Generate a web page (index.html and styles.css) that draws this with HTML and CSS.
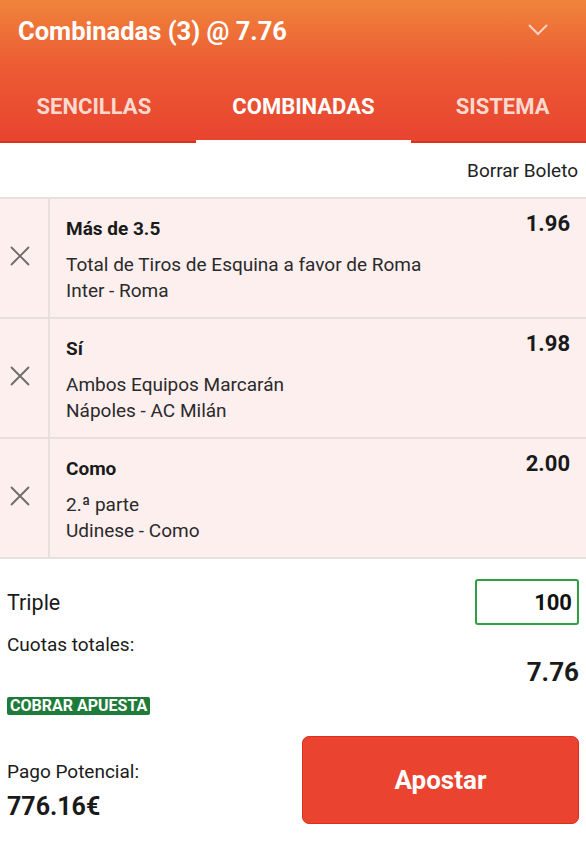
FILE: index.html
```html
<!DOCTYPE html>
<html lang="es">
<head>
    <meta charset="UTF-8">
    <title>Boleto - Combinadas</title>
    <meta name="viewport" content="width=device-width, initial-scale=1.0">
    <link rel="stylesheet" href="styles.css">
</head>
<body>

<header class="slip-header">
    <div class="slip-title">
        <span>Combinadas (3) @ 7.76</span>
        <svg class="chevron" width="22" height="14" viewBox="0 0 22 14">
            <polyline points="2,2 11,11 20,2" fill="none" stroke="#fbd3c2" stroke-width="2"/>
        </svg>
    </div>
    <nav class="tabs">
        <a href="#" class="tab">SENCILLAS</a>
        <a href="#" class="tab active">COMBINADAS</a>
        <a href="#" class="tab">SISTEMA</a>
    </nav>
</header>

<div class="clear-row">
    <a href="#" class="clear-link">Borrar Boleto</a>
</div>

<div class="bets">
    <div class="bet">
        <button class="remove">
            <svg width="22" height="22" viewBox="0 0 22 22"><path d="M2 2L20 20M20 2L2 20" stroke="#6b6b6b" stroke-width="1.8"/></svg>
        </button>
        <div class="bet-info">
            <div class="bet-top">
                <strong>Más de 3.5</strong>
                <span class="odds">1.96</span>
            </div>
            <p>Total de Tiros de Esquina a favor de Roma<br>Inter - Roma</p>
        </div>
    </div>
    <div class="bet">
        <button class="remove">
            <svg width="22" height="22" viewBox="0 0 22 22"><path d="M2 2L20 20M20 2L2 20" stroke="#6b6b6b" stroke-width="1.8"/></svg>
        </button>
        <div class="bet-info">
            <div class="bet-top">
                <strong>Sí</strong>
                <span class="odds">1.98</span>
            </div>
            <p>Ambos Equipos Marcarán<br>Nápoles - AC Milán</p>
        </div>
    </div>
    <div class="bet">
        <button class="remove">
            <svg width="22" height="22" viewBox="0 0 22 22"><path d="M2 2L20 20M20 2L2 20" stroke="#6b6b6b" stroke-width="1.8"/></svg>
        </button>
        <div class="bet-info">
            <div class="bet-top">
                <strong>Como</strong>
                <span class="odds">2.00</span>
            </div>
            <p>2.ª parte<br>Udinese - Como</p>
        </div>
    </div>
</div>

<div class="summary">
    <div class="stake-row">
        <span class="stake-label">Triple</span>
        <input class="stake-input" type="text" value="100">
    </div>
    <div class="odds-row">
        <div class="odds-left">
            <span>Cuotas totales:</span>
            <span class="cashout">COBRAR APUESTA</span>
        </div>
        <strong class="total-odds">7.76</strong>
    </div>
    <div class="payout-row">
        <div class="payout">
            <span>Pago Potencial:</span>
            <strong>776.16€</strong>
        </div>
        <button class="bet-btn">Apostar</button>
    </div>
</div>

</body>
</html>
```

FILE: styles.css
```css
body {
    margin: 0;
    padding: 0;
    font-family: Roboto, 'Noto Sans', sans-serif;
    background: #fff;
    color: #1a1a1a;
    width: 586px;
}
.slip-header {
    background: linear-gradient(to bottom, #ef843b 0%, #ec5c34 45%, #e8432f 100%);
    color: #fff;
}
.slip-title {
    height: 62px;
    display: flex;
    align-items: center;
    justify-content: space-between;
    padding: 0 37px 0 18px;
    font-size: 25.5px;
    font-weight: bold;
}
.chevron {
    margin-top: -2px;
}
.tabs {
    display: flex;
    height: 81px;
}
.tab {
    flex: 1 1 auto;
    display: flex;
    align-items: center;
    justify-content: center;
    padding-top: 10px;
    box-sizing: border-box;
    color: #fcd9cf;
    text-decoration: none;
    font-size: 22px;
    font-weight: bold;
    border-bottom: 2px solid #d8321f;
}
.tab:first-child {
    padding-right: 8px;
}
.tab:last-child {
    padding-left: 8px;
}
.tab.active {
    color: #fff;
    border-bottom: 3px solid #fff;
}
.clear-row {
    display: flex;
    justify-content: flex-end;
    align-items: center;
    height: 54px;
    padding-right: 8px;
}
.clear-link {
    color: #222;
    text-decoration: none;
    font-size: 19px;
}
.bets {
    border-top: 2px solid #e6e0df;
}
.bet {
    display: flex;
    height: 118px;
    background: #fcefee;
    border-bottom: 2px solid #e6e0df;
}
.remove {
    width: 50px;
    flex: none;
    border: none;
    border-right: 2px solid #e6e0df;
    background: transparent;
    display: flex;
    align-items: center;
    justify-content: flex-start;
    padding: 0 0 4px 9px;
}
.bet-info {
    flex: 1;
    padding: 13px 16px 0 16px;
}
.bet-top {
    display: flex;
    justify-content: space-between;
    align-items: flex-start;
}
.bet-top strong {
    font-size: 19px;
    line-height: 24px;
    margin-top: 5px;
}
.odds {
    font-size: 22px;
    line-height: 26px;
    font-weight: bold;
    margin-top: -1px;
}
.bet-info p {
    margin: 11px 0 0;
    font-size: 19px;
    line-height: 26px;
    color: #2a2a2a;
}
.summary {
    padding: 20px 7px 0 7px;
}
.stake-row {
    display: flex;
    justify-content: space-between;
    align-items: center;
}
.stake-label {
    font-size: 21.5px;
}
.stake-input {
    width: 104px;
    height: 46px;
    box-sizing: border-box;
    border: 2px solid #2ea043;
    border-radius: 3px;
    text-align: right;
    font-family: inherit;
    font-size: 22px;
    font-weight: bold;
    padding: 0 5px;
    color: #111;
    outline: none;
}
.odds-row {
    display: flex;
    justify-content: space-between;
    align-items: center;
    margin-top: 9px;
}
.odds-left {
    display: flex;
    flex-direction: column;
    align-items: flex-start;
    gap: 41px;
    font-size: 19px;
    line-height: 22px;
}
.total-odds {
    font-size: 26px;
    margin-bottom: 6px;
}
.cashout {
    background: #1f7b3a;
    color: #fff;
    font-size: 16px;
    font-weight: bold;
    padding: 0 3px;
    border-radius: 2px;
    line-height: 18px;
}
.payout-row {
    display: flex;
    justify-content: space-between;
    align-items: flex-start;
    margin-top: 21px;
}
.payout {
    display: flex;
    flex-direction: column;
    gap: 9px;
    padding-top: 25px;
}
.payout span {
    font-size: 19px;
    line-height: 22px;
}
.payout strong {
    font-size: 25px;
    line-height: 30px;
}
.bet-btn {
    width: 277px;
    height: 88px;
    background: #ea4330;
    border: 1px solid #dc2f1f;
    border-radius: 7px;
    color: #fff;
    font-family: inherit;
    font-size: 26px;
    font-weight: bold;
}
```
